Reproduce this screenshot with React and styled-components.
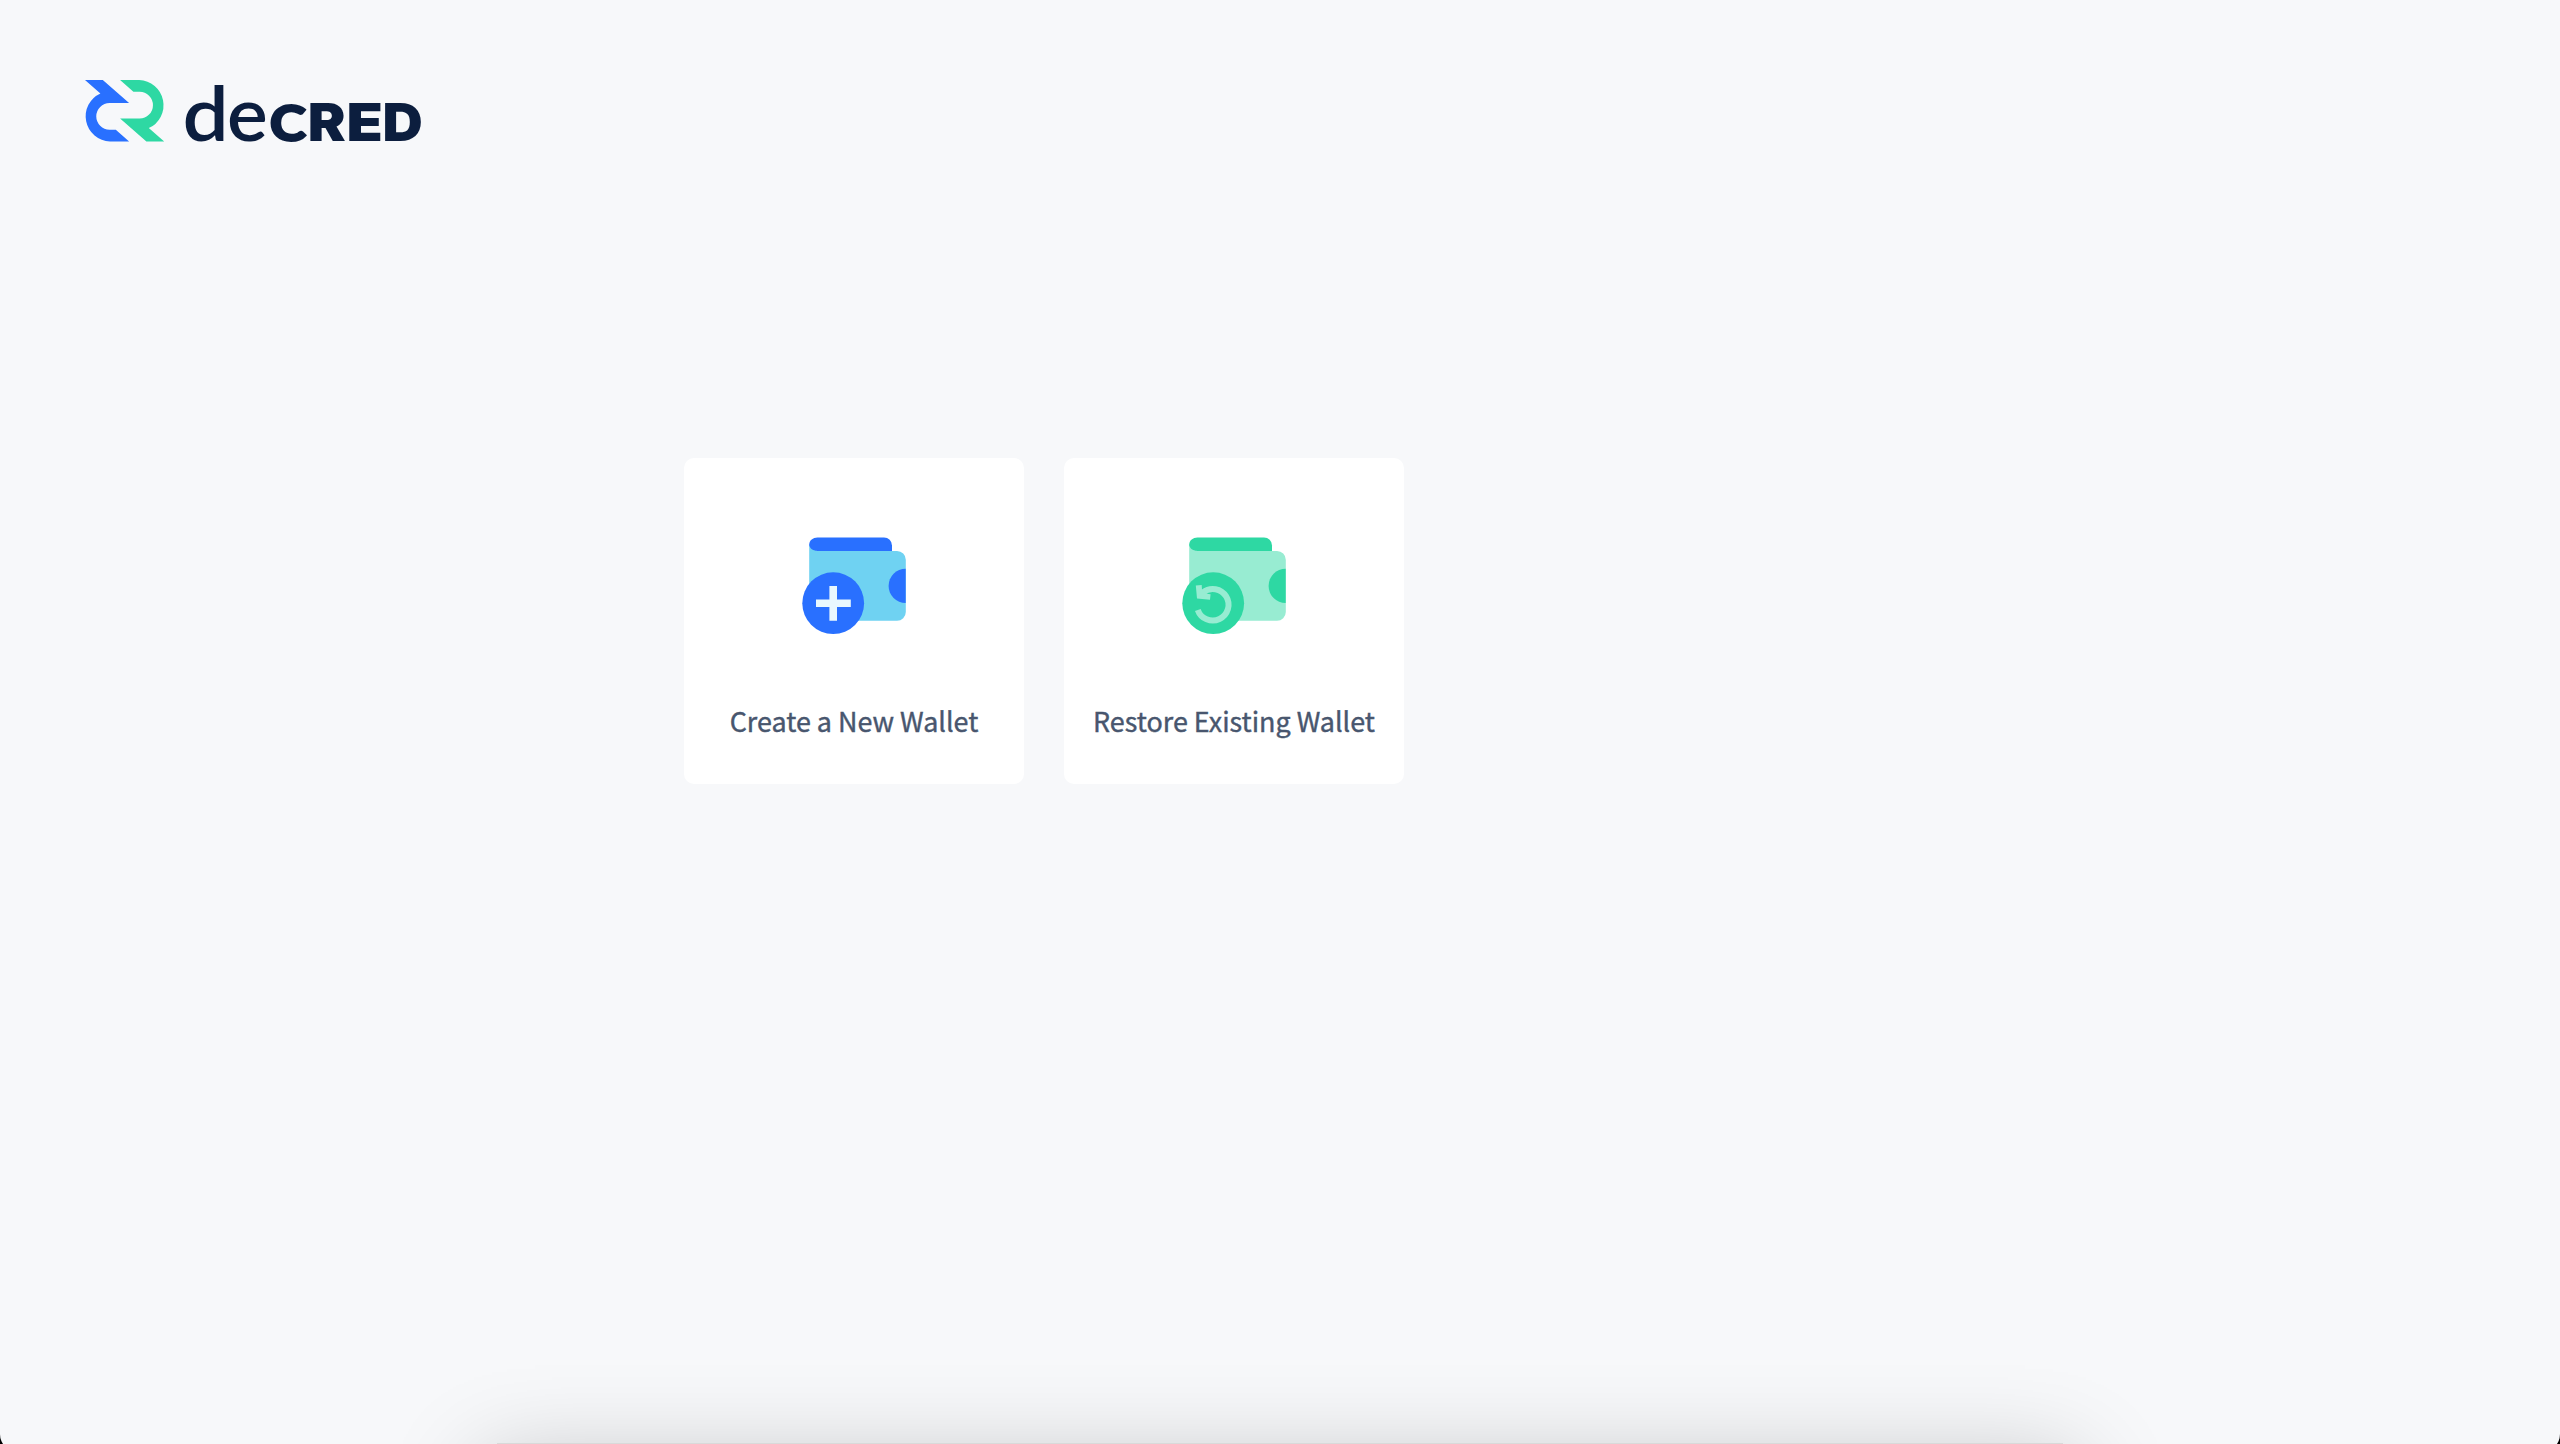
import React from "react";
import styled, { createGlobalStyle } from "styled-components";

const GlobalStyle = createGlobalStyle`
  * { box-sizing: border-box; }
  body { margin: 0; background: #000; }
`;

const Screen = styled.div`
  position: relative;
  height: 1444px;
  overflow: hidden;
  background: #000;
`;

const Window = styled.main`
  height: 1452px;
  padding: 80px 0 0 85px;
  border-radius: 0 0 18px 18px;
  background: #f7f8fa;
  display: flex;
  flex-direction: column;
  align-items: flex-start;
`;

const Brand = styled.header`
  display: flex;
  height: 62px;
`;

const LogoSvg = styled.svg`
  display: block;
  overflow: visible;
`;

const Letter = styled.text`
  font-family: ${(p) => p.$family}, sans-serif;
  font-size: ${(p) => p.$size}px;
  font-weight: ${(p) => p.$weight};
  fill: #0c1e3e;
  stroke: #0c1e3e;
  stroke-width: ${(p) => p.$stroke || 0}px;
`;

const Options = styled.section`
  display: flex;
  gap: 40px;
  margin: 316px 0 0 599px;
`;

const Card = styled.button`
  width: 340px;
  height: 326px;
  padding: 67px 0 0;
  border: 0;
  border-radius: 10px;
  background: #fff;
  display: flex;
  flex-direction: column;
  align-items: center;
`;

const WalletSvg = styled.svg`
  display: block;
  width: 130px;
  height: 120px;
  margin-left: 2px;
`;

const Label = styled.span`
  margin-top: 56px;
  font: 400 26.9px/40px "Noto Sans CJK SC", sans-serif;
  color: #48566e;
  white-space: nowrap;
  -webkit-text-stroke: 0.4px #48566e;
`;

const DockShadow = styled.div`
  position: absolute;
  left: 497px;
  top: 1443px;
  width: 1566px;
  height: 400px;
  background: #d9d9d9;
  box-shadow: 0 35px 90px 15px rgba(0, 0, 0, 0.23);
`;

const HALF = "M0 0H17.8L44.1 23H24.6A13.35 13.35 0 0 0 24.6 49.7H30.8L44.1 61.5H25A25.2 25.2 0 0 1 15.4 13.4Z";

const LETTERS = [
  { char: "d", x: 97.5, y: 61, stretch: 1.1, family: "Lato", size: 74.5, weight: 600 },
  { char: "e", x: 142, y: 61, stretch: 1.03, family: "Lato", size: 74.5, weight: 600 },
  { char: "C", x: 184.8, y: 60.5, stretch: 1.1, family: "Lato", size: 50, weight: 900, stroke: 2 },
  { char: "R", x: 222.7, y: 61, stretch: 1.1, family: "Inter", size: 51.6, weight: 900 },
  { char: "E", x: 261.4, y: 61, stretch: 1.15, family: "Inter", size: 51.6, weight: 900 },
  { char: "D", x: 297.6, y: 61, stretch: 1.08, family: "Inter", size: 51.6, weight: 900 },
];

function Logo() {
  return (
    <LogoSvg width="340" height="62" viewBox="0 0 340 62">
      <path d={HALF} fill="#2970ff" />
      <path d={HALF} fill="#2ed8a3" transform="rotate(180 39.6 30.75)" />
      {LETTERS.map((l) => (
        <Letter
          key={l.char}
          transform={`translate(${l.x} ${l.y}) scale(${l.stretch} 1)`}
          $family={l.family}
          $size={l.size}
          $weight={l.weight}
          $stroke={l.stroke}
        >
          {l.char}
        </Letter>
      ))}
    </LogoSvg>
  );
}

function WalletIcon({ main, soft, children }) {
  return (
    <WalletSvg viewBox="0 0 130 120">
      <path d="M19.2 19.5L27 26H107a8.8 8.8 0 0 1 8.8 8.8V87a8.8 8.8 0 0 1-8.8 8.8H19.2Z" fill={soft} />
      <path d="M27.5 12.4H94a8 8 0 0 1 8 8V26H27.5C22.5 26 19.2 22.8 19.2 19.6C19.2 15.5 23 12.4 27.5 12.4Z" fill={main} />
      <path d="M115.7 43.8A17.1 17.1 0 0 0 115.7 78Z" fill={main} />
      <circle cx="43.2" cy="78.2" r="30.9" fill={main} />
      {children}
    </WalletSvg>
  );
}

export default function App() {
  return (
    <>
      <GlobalStyle />
      <Screen>
        <Window>
          <Brand><Logo /></Brand>
          <Options>
            <Card>
              <WalletIcon main="#2970ff" soft="#6fd2f2">
                <path d="M39.4 61H47V74.4H60.8V82H47V95.8H39.4V82H26V74.4H39.4Z" fill="#e9f8fe" />
              </WalletIcon>
              <Label>Create a New Wallet</Label>
            </Card>
            <Card>
              <WalletIcon main="#2ed8a3" soft="#98ecd2">
                <path d="M27.8 84.9A15.8 15.8 0 1 0 33 67.3" fill="none" stroke="#98ecd2" strokeWidth="6" />
                <path d="M25.8 60.4L31.7 60L32 64.7L37 68.7L40.6 69.3L40 74.7L27 73.5Z" fill="#98ecd2" />
              </WalletIcon>
              <Label>Restore Existing Wallet</Label>
            </Card>
          </Options>
        </Window>
        <DockShadow />
      </Screen>
    </>
  );
}
